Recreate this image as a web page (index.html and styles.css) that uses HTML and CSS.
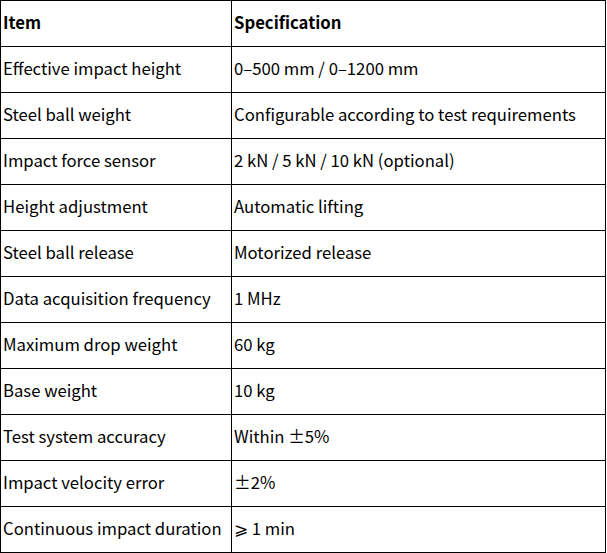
FILE: index.html
```html
<!DOCTYPE html>
<html>
<head>
<meta charset="utf-8">
<link rel="stylesheet" href="styles.css">
</head>
<body>
<table class="spec">
  <thead>
    <tr><th class="c1">Item</th><th class="c2">Specification</th></tr>
  </thead>
  <tbody>
    <tr><td>Effective impact height</td><td>0–500 mm / 0–1200 mm</td></tr>
    <tr><td>Steel ball weight</td><td>Configurable according to test requirements</td></tr>
    <tr><td>Impact force sensor</td><td>2 kN / 5 kN / 10 kN (optional)</td></tr>
    <tr><td>Height adjustment</td><td>Automatic lifting</td></tr>
    <tr><td>Steel ball release</td><td>Motorized release</td></tr>
    <tr><td>Data acquisition frequency</td><td>1 MHz</td></tr>
    <tr><td>Maximum drop weight</td><td>60 kg</td></tr>
    <tr><td>Base weight</td><td>10 kg</td></tr>
    <tr><td>Test system accuracy</td><td>Within ±5%</td></tr>
    <tr><td>Impact velocity error</td><td>±2%</td></tr>
    <tr><td>Continuous impact duration</td><td>⩾ 1 min</td></tr>
  </tbody>
</table>
</body>
</html>
```
FILE: styles.css
```css
html, body {
  margin: 0;
  padding: 0;
  background: #fff;
}
.spec {
  border-collapse: collapse;
  width: 606px;
  font-family: "Noto Sans CJK SC", "Noto Sans", sans-serif;
  font-size: 16.7px;
  color: #000;
  table-layout: fixed;
}
.spec th, .spec td {
  border: 1px solid #000;
  height: 46px;
  padding: 0 0 4px 2px;
  text-align: left;
  vertical-align: middle;
  box-sizing: border-box;
}
.spec th {
  font-weight: bold;
}
.c1 { width: 231px; }
```
